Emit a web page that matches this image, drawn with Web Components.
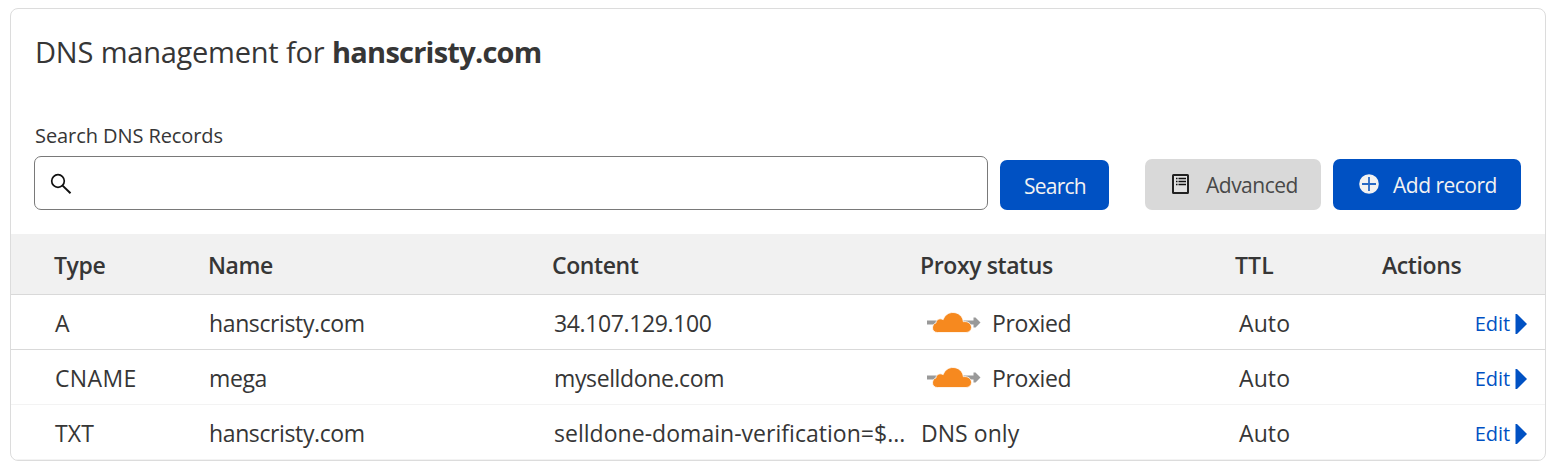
<!DOCTYPE html>
<html lang="en">
<head>
<meta charset="utf-8">
<title>DNS management</title>
<style>
body{margin:0;background:#fff;font-family:"Open Sans","Noto Sans",sans-serif;color:#363636}
b{letter-spacing:-.76px}
</style>
</head>
<body>
<dns-card>
  <span slot="title">DNS management for <b>hanscristy.com</b></span>
  <dns-toolbar slot="toolbar"></dns-toolbar>
  <dns-row head><span slot="type">Type</span><span slot="name">Name</span><span slot="content">Content</span><span slot="proxy">Proxy status</span><span slot="ttl">TTL</span><span slot="action">Actions</span></dns-row>
  <dns-row><span slot="type">A</span><span slot="name">hanscristy.com</span><span slot="content">34.107.129.100</span><proxy-status slot="proxy">Proxied</proxy-status><span slot="ttl">Auto</span><edit-link slot="action">Edit</edit-link></dns-row>
  <dns-row faint><span slot="type" style="letter-spacing:.35px">CNAME</span><span slot="name">mega</span><span slot="content">myselldone.com</span><proxy-status slot="proxy">Proxied</proxy-status><span slot="ttl">Auto</span><edit-link slot="action">Edit</edit-link></dns-row>
  <dns-row faint><span slot="type" style="letter-spacing:.2px">TXT</span><span slot="name">hanscristy.com</span><span slot="content" style="letter-spacing:.03px">selldone-domain-verification=$...</span><span slot="proxy" style="letter-spacing:.05px">DNS only</span><span slot="ttl">Auto</span><edit-link slot="action">Edit</edit-link></dns-row>
</dns-card>
<script>
const define = (name, html) => customElements.define(name, class extends HTMLElement {
  constructor() {
    super();
    this.attachShadow({mode: 'open'}).innerHTML = html;
  }
});

define('dns-card', `<style>
:host{display:block;box-sizing:border-box;width:1536px;height:453px;margin:8px 0 0 10px;border:1px solid #dcdcdc;border-radius:8px;overflow:hidden}
h1{margin:0;padding:23px 0 0 24px;height:86px;font:400 29px/40px "Open Sans",sans-serif;letter-spacing:-.25px;word-spacing:.4px;white-space:nowrap}
::slotted(dns-toolbar){height:116px}
</style><h1><slot name="title"></slot></h1><slot name="toolbar"></slot><slot></slot>`);

define('dns-toolbar', `<style>
:host{display:block;padding:0 24px 0 23px}
label{display:block;height:24px;padding:4px 0 10px 1px;font-size:20px;line-height:28px;letter-spacing:-.08px}
.bar{display:flex;align-items:flex-end;height:54px}
.field{box-sizing:border-box;width:954px;height:54px;border:1px solid #797979;border-radius:7px;display:flex;align-items:center;padding:1px 0 0 15px}
.go{margin:0 36px 0 12px;letter-spacing:-.75px}
.add{margin-left:12px}
</style>
<label>Search DNS Records</label>
<div class="bar">
<div class="field"><svg width="22" height="22" viewBox="0 0 22 22" fill="none" stroke="#111" stroke-width="1.7"><circle cx="8" cy="8" r="6.3"/><path d="M12.6 12.6 20.5 20.2" stroke-width="2"/></svg></div>
<dns-button class="go" style="--w:109px;--h:50px;--pad:0 0 0 24px">Search</dns-button>
<dns-button style="--w:176px;--h:51px;--bg:#d9d9d9;--fg:#484848;--pad:0 0 2px 27px"><svg slot="icon" width="18" height="22" viewBox="0 0 18 22" style="margin-right:16px"><rect x="1" y="2" width="15" height="18" rx=".5" fill="#e2e2e2" stroke="#222" stroke-width="2"/><path d="M4 5.5h1.500M4 8.500h1.500M4 11.500h1.500M6.500 5.500H14M6.500 8.500H14M6.500 11.500H14" stroke="#111" stroke-width="1.5"/></svg>Advanced</dns-button>
<dns-button class="add" style="--w:188px;--h:51px;--pad:0 0 2px 26px"><svg slot="icon" width="20" height="20" viewBox="0 0 20 20" style="margin-right:14px"><circle cx="10" cy="10" r="9.8" fill="#f2f2f2"/><path d="M10 3v14M3 10h14" stroke="#2768c4" stroke-width="1.8"/></svg>Add record</dns-button>
</div>`);

define('dns-button', `<style>
:host{display:flex;align-items:center;box-sizing:border-box;width:var(--w);height:var(--h);padding:var(--pad);background:var(--bg,#0051c3);color:var(--fg,#f2f2f2);border-radius:7px;font-size:21px;letter-spacing:-.5px;white-space:nowrap}
.t{padding-top:2px}
</style><slot name="icon"></slot><span class="t"><slot></slot></span>`);

define('dns-row', `<style>
:host{display:grid;grid-template-columns:154px 345px 367px 318px 146px 1fr;align-items:center;box-sizing:border-box;height:55px;padding:2px 18px 0 44px;border-bottom:1px solid #d9d9d9;font-size:23px;letter-spacing:-.38px;white-space:nowrap}
:host([head]){height:61px;padding:2px 18px 0 43px;background:#f1f1f1;font-weight:600;letter-spacing:-.4px;grid-template-columns:154px 344px 368px 315px 147px 1fr}
:host([faint]){border-color:#f3f3f3}
::slotted([slot="ttl"]){letter-spacing:.1px}
</style><slot name="type"></slot><slot name="name"></slot><slot name="content"></slot><slot name="proxy"></slot><slot name="ttl"></slot><slot name="action"></slot>`);

define('proxy-status', `<style>
:host{display:flex;align-items:center}
svg{margin:0 10px 0 6px}
</style><svg width="55" height="22" viewBox="0 0 55 22">
<path d="M0 8.500H46.500V5.500H48.500L53.500 10.500 48.500 15.500H46.500V12.500H0z" fill="#999"/>
<path d="M10.500 20.500c-3 0-5-1.800-5-4.600 0-2.800 1.700-4.600 3.500-5-.1-3.200 3.900-5.200 7.200-3.300C17.600 3.200 21.500.5 26 .5c5.600 0 9.900 4.100 10.300 9.200 4.400-.8 8.200 2 8.200 5.700 0 3-2.500 5.100-5.500 5.100z" fill="#f6891f" stroke="#fff" stroke-width=".8"/></svg><slot></slot>`);

define('edit-link', `<style>
:host{display:flex;align-items:center;justify-content:flex-end;color:#0051c3;font-size:20px;letter-spacing:-.05px}
svg{margin:1px 0 0 5px}
</style><slot></slot><svg width="12" height="20" viewBox="0 0 12 20"><path d="M.5 0H2L11.500 9.500v1L2 20H.5z" fill="#0051c3"/></svg>`);
</script>
</body>
</html>
